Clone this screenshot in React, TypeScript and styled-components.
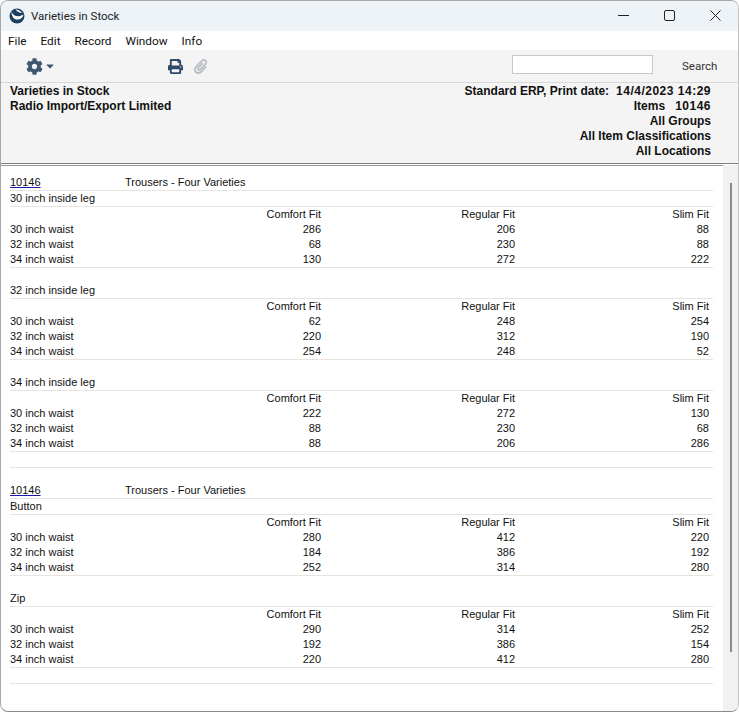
import React from 'react';
import styled, { createGlobalStyle } from 'styled-components';
import { FaCog, FaPaperclip, FaPrint, FaCaretDown } from 'react-icons/fa';

const GlobalStyle = createGlobalStyle`
  html, body {
    margin: 0;
    padding: 0;
    background: #fff;
  }
  body {
    font-family: "Liberation Sans", Arial, sans-serif;
    font-size: 11px;
    color: #111;
  }
`;

const WindowBox = styled.div`
  width: 739px;
  height: 712px;
  box-sizing: border-box;
  display: flex;
  flex-direction: column;
  overflow: hidden;
  border: 1px solid #a8a8a8;
  border-bottom-color: #8a8a8a;
  border-right-color: #c0c0c0;
  border-radius: 8px;
  background: #fff;
`;

const TitleBar = styled.div`
  height: 30px;
  flex: none;
  display: flex;
  align-items: center;
  background: #eef3f8;
  padding-left: 8px;
`;

const AppTitle = styled.div`
  margin-left: 6px;
  font-family: Roboto, sans-serif;
  font-size: 11.5px;
  color: #222;
`;

const WinButtons = styled.div`
  margin-left: auto;
  display: flex;
  height: 100%;
`;

const WinButton = styled.div`
  width: 46px;
  padding-bottom: 1px;
  box-sizing: border-box;
  display: flex;
  align-items: center;
  justify-content: center;
`;

const MenuBar = styled.div`
  height: 19px;
  flex: none;
  display: flex;
  align-items: center;
  gap: 14px;
  padding-left: 7px;
  background: #fff;
  font-family: Roboto, sans-serif;
  font-size: 11.8px;
  color: #111;
`;

const ToolBar = styled.div`
  height: 33px;
  flex: none;
  box-sizing: border-box;
  display: flex;
  align-items: center;
  background: #f4f4f4;
  border-bottom: 1px solid #d9d9d9;
`;

const GearWrap = styled.div`
  margin-left: 25px;
  display: flex;
  align-items: center;
  gap: 1px;
  color: #3f5871;
  font-size: 17px;
`;

const PrintWrap = styled.div`
  margin-left: 112px;
  display: flex;
  align-items: center;
  gap: 10px;
  font-size: 15px;
`;

const PrintIcon = styled(FaPrint)`
  color: #2f4a66;
`;

const ClipIcon = styled(FaPaperclip)`
  color: #b9c0c8;
`;

const SearchInput = styled.div`
  margin-left: auto;
  margin-bottom: 3px;
  width: 139px;
  height: 17px;
  border: 1px solid #c8c8c8;
  background: #fff;
`;

const SearchLabel = styled.div`
  width: 85px;
  box-sizing: border-box;
  padding-left: 29px;
  font-family: Roboto, sans-serif;
  font-size: 11.5px;
  color: #333;
`;

const ReportHead = styled.div`
  height: 81px;
  flex: none;
  box-sizing: border-box;
  display: flex;
  justify-content: space-between;
  padding: 1px 27px 0 9px;
  background: #f4f4f4;
  border-bottom: 1px solid #808080;
  font-weight: 700;
  font-size: 12px;
  line-height: 15px;
  color: #111;
`;

const HeadRight = styled.div`
  text-align: right;
`;

const HeadFigure = styled.span<{ $gap: number }>`
  margin-left: ${(p) => p.$gap}px;
  letter-spacing: 0.5px;
`;

const Body = styled.div`
  flex: 1;
  display: flex;
  min-height: 0;
  border-top: 1px solid #fff;
  box-shadow: inset 0 1px 0 #999;
`;

const Sheet = styled.div`
  flex: 1;
  padding: 10px 10px 0 9px;
`;

const ItemHead = styled.div`
  display: grid;
  grid-template-columns: 115px 1fr;
  height: 15px;
  line-height: 15px;
  border-bottom: 1px solid #e6e3e0;
`;

const ItemCode = styled.span`
  text-decoration: underline;
  text-decoration-color: #1a1ab0;
`;

const GroupLabel = styled.div`
  height: 15px;
  line-height: 15px;
  border-bottom: 1px solid #e6e3e0;
`;

const Row = styled.div`
  display: grid;
  grid-template-columns: 311px 194px 194px 4px;
  height: 15px;
  line-height: 15px;
`;

const Cell = styled.div`
  text-align: right;
`;

const LeadCell = styled.div`
  display: flex;
  justify-content: space-between;
`;

const Group = styled.div`
  margin-bottom: 15px;
`;

const TableEnd = styled.div`
  border-bottom: 1px solid #e6e3e0;
`;

const ItemEnd = styled.div`
  border-bottom: 1px solid #e6e3e0;
  margin-bottom: 15px;
`;

const Track = styled.div`
  width: 15px;
  flex: none;
  background: #f1f1f1;
  padding-top: 18px;
  display: flex;
  justify-content: center;
`;

const Thumb = styled.div`
  width: 2px;
  height: 469px;
  background: #8a8a8a;
`;

type GroupData = { label: string; rows: number[][] };

const waists = ['30 inch waist', '32 inch waist', '34 inch waist'];

const items: GroupData[][] = [
  [
    { label: '30 inch inside leg', rows: [[286, 206, 88], [68, 230, 88], [130, 272, 222]] },
    { label: '32 inch inside leg', rows: [[62, 248, 254], [220, 312, 190], [254, 248, 52]] },
    { label: '34 inch inside leg', rows: [[222, 272, 130], [88, 230, 68], [88, 206, 286]] },
  ],
  [
    { label: 'Button', rows: [[280, 412, 220], [184, 386, 192], [252, 314, 280]] },
    { label: 'Zip', rows: [[290, 314, 252], [192, 386, 154], [220, 412, 280]] },
  ],
];

function AppLogo() {
  return (
    <svg width="16" height="16" viewBox="0 0 16 16">
      <circle cx="8" cy="8" r="7.500" fill="#1d3f5e" />
      <path d="M2.500 3.500C4 8 9 10 14.500 6.500 14 10 10.500 12 7.500 11.500 4.500 11 2.500 8 2.500 3.500z" fill="#fff" />
      <path d="M6.500 1.500c3 .2 5.500 1.200 6.500 3.500-2.500-.3-5.300-1.300-6.500-3.500z" fill="#dfe9f2" />
    </svg>
  );
}

export default function App() {
  return (
    <WindowBox>
      <GlobalStyle />
      <TitleBar>
        <AppLogo />
        <AppTitle>Varieties in Stock</AppTitle>
        <WinButtons>
          <WinButton>
            <svg width="11" height="11" viewBox="0 0 11 11"><path d="M0 5.500h11" stroke="#222" /></svg>
          </WinButton>
          <WinButton>
            <svg width="11" height="11" viewBox="0 0 11 11"><rect x=".5" y=".5" width="10" height="10" rx="1.500" fill="none" stroke="#222" /></svg>
          </WinButton>
          <WinButton>
            <svg width="11" height="11" viewBox="0 0 11 11"><path d="M.5.500l10 10M10.500.5l-10 10" stroke="#222" /></svg>
          </WinButton>
        </WinButtons>
      </TitleBar>
      <MenuBar>
        <span>File</span>
        <span>Edit</span>
        <span>Record</span>
        <span>Window</span>
        <span>Info</span>
      </MenuBar>
      <ToolBar>
        <GearWrap>
          <FaCog />
          <FaCaretDown size={12} />
        </GearWrap>
        <PrintWrap>
          <PrintIcon />
          <ClipIcon />
        </PrintWrap>
        <SearchInput />
        <SearchLabel>Search</SearchLabel>
      </ToolBar>
      <ReportHead>
        <div>
          <div>Varieties in Stock</div>
          <div>Radio Import/Export Limited</div>
        </div>
        <HeadRight>
          <div>Standard ERP, Print date:<HeadFigure $gap={7}>14/4/2023 14:29</HeadFigure></div>
          <div>Items<HeadFigure $gap={10}>10146</HeadFigure></div>
          <div>All Groups</div>
          <div>All Item Classifications</div>
          <div>All Locations</div>
        </HeadRight>
      </ReportHead>
      <Body>
        <Sheet>
          {items.map((groups, i) => (
            <div key={i}>
              <ItemHead>
                <ItemCode>10146</ItemCode>
                <span>Trousers - Four Varieties</span>
              </ItemHead>
              {groups.map((g) => (
                <Group key={g.label}>
                  <GroupLabel>{g.label}</GroupLabel>
                  <Row>
                    <Cell>Comfort Fit</Cell>
                    <Cell>Regular Fit</Cell>
                    <Cell>Slim Fit</Cell>
                  </Row>
                  {g.rows.map((r, j) => (
                    <Row key={j}>
                      <LeadCell>
                        <span>{waists[j]}</span>
                        <span>{r[0]}</span>
                      </LeadCell>
                      <Cell>{r[1]}</Cell>
                      <Cell>{r[2]}</Cell>
                    </Row>
                  ))}
                  <TableEnd />
                </Group>
              ))}
              <ItemEnd />
            </div>
          ))}
        </Sheet>
        <Track>
          <Thumb />
        </Track>
      </Body>
    </WindowBox>
  );
}
